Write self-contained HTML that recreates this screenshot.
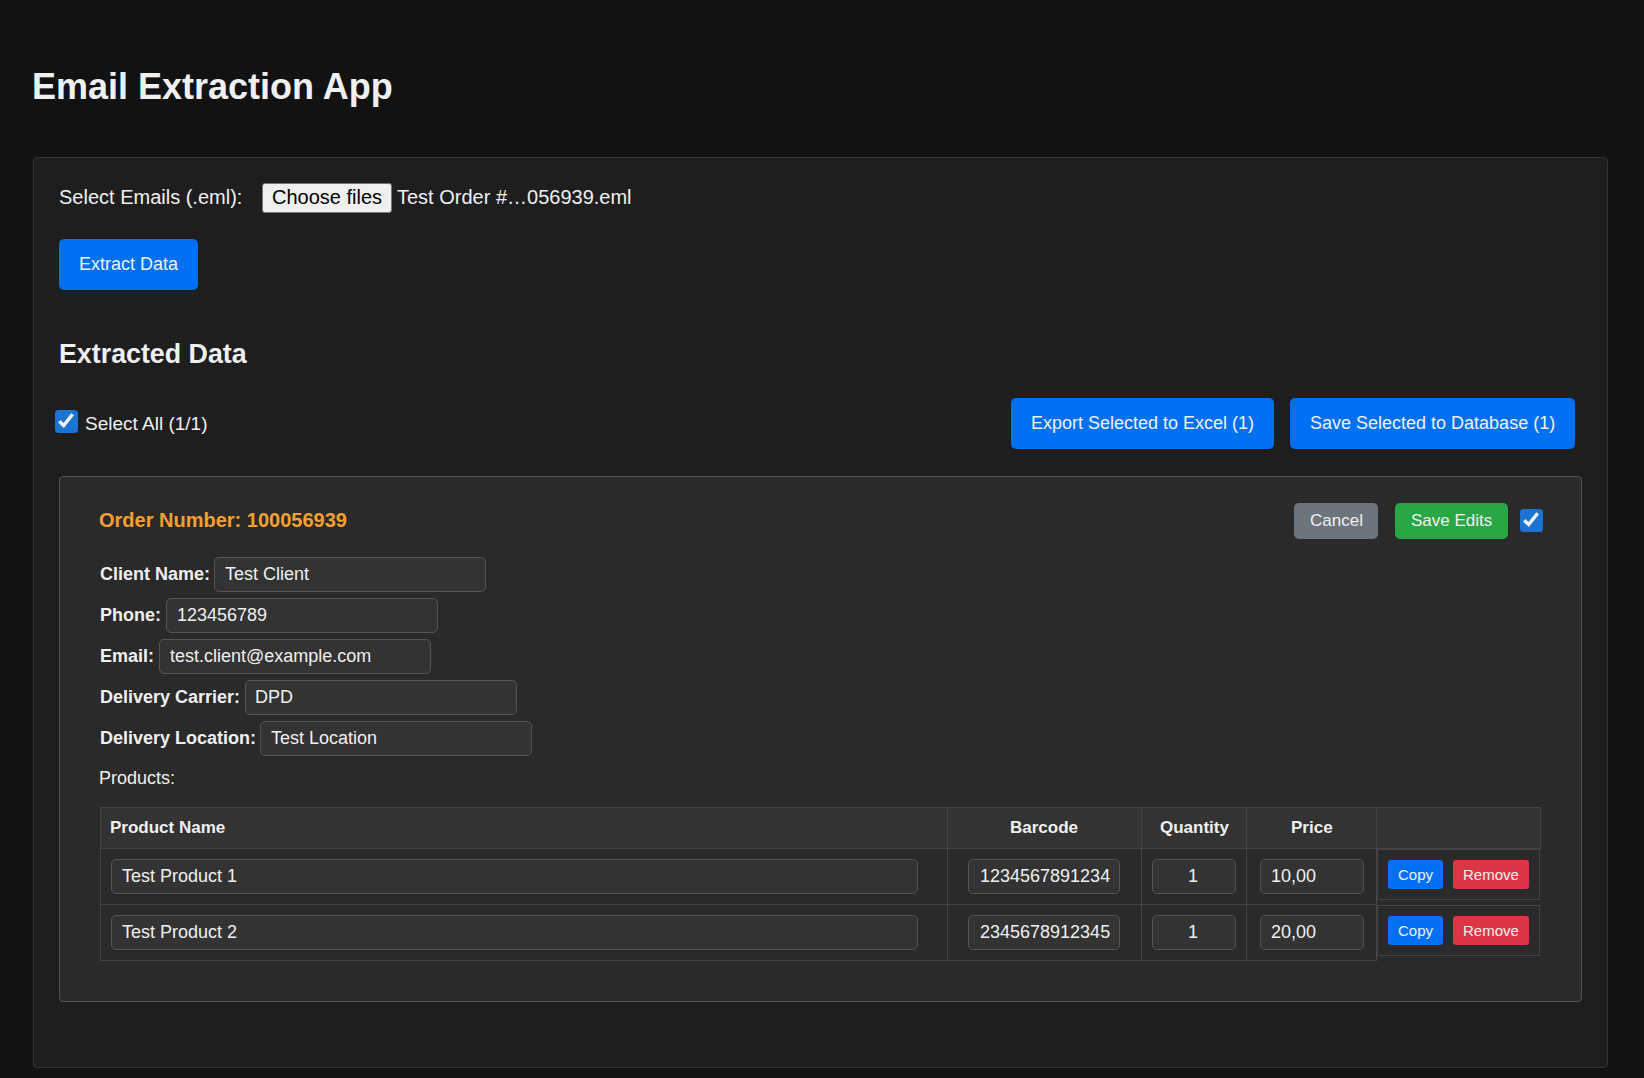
<!DOCTYPE html>
<html><head><meta charset="utf-8"><title>Email Extraction App</title>
<style>
html,body{margin:0;padding:0;background:#121212;width:1644px;height:1078px;overflow:hidden;font-family:"Liberation Sans", sans-serif;}
.r{position:absolute;box-sizing:border-box;}
.t{position:absolute;white-space:pre;font-family:"Liberation Sans", sans-serif;}
</style></head><body>

<div class="r" style="left:33px;top:157px;width:1575px;height:911px;background:#1e1e1e;border:1px solid #333333;border-radius:4px"></div>
<div class="r" style="left:262px;top:183px;width:130px;height:30px;background:#efefef;border:1px solid #767676;border-radius:3px"></div>
<div class="r" style="left:59px;top:239px;width:139px;height:51px;background:#0070f3;border-radius:5px"></div>
<div class="r" style="left:1011px;top:398px;width:263px;height:51px;background:#0070f3;border-radius:5px"></div>
<div class="r" style="left:1290px;top:398px;width:285px;height:51px;background:#0070f3;border-radius:5px"></div>
<div class="r" style="left:59px;top:476px;width:1523px;height:526px;background:#2a2a2a;border:1px solid #555555;border-radius:4px"></div>
<div class="r" style="left:1294px;top:503px;width:84px;height:36px;background:#6c757d;border-radius:5px"></div>
<div class="r" style="left:1395px;top:503px;width:113px;height:36px;background:#28a745;border-radius:5px"></div>
<div class="r" style="left:214px;top:557px;width:272px;height:35px;background:#333333;border:1px solid #555555;border-radius:5px"></div>
<div class="r" style="left:166px;top:598px;width:272px;height:35px;background:#333333;border:1px solid #555555;border-radius:5px"></div>
<div class="r" style="left:159px;top:639px;width:272px;height:35px;background:#333333;border:1px solid #555555;border-radius:5px"></div>
<div class="r" style="left:245px;top:680px;width:272px;height:35px;background:#333333;border:1px solid #555555;border-radius:5px"></div>
<div class="r" style="left:260px;top:721px;width:272px;height:35px;background:#333333;border:1px solid #555555;border-radius:5px"></div>
<div class="r" style="left:100px;top:807px;width:1277px;height:42px;background:#333333;border-radius:0px"></div>
<div class="r" style="left:1377px;top:807px;width:164px;height:42px;background:#333333;border-radius:0px"></div>
<div class="r" style="left:111px;top:859px;width:807px;height:35px;background:#333333;border:1px solid #555555;border-radius:5px"></div>
<div class="r" style="left:968px;top:859px;width:152px;height:35px;background:#333333;border:1px solid #555555;border-radius:5px"></div>
<div class="r" style="left:1152px;top:859px;width:84px;height:35px;background:#333333;border:1px solid #555555;border-radius:5px"></div>
<div class="r" style="left:1260px;top:859px;width:104px;height:35px;background:#333333;border:1px solid #555555;border-radius:5px"></div>
<div class="r" style="left:1377px;top:849px;width:163px;height:51px;background:transparent;border:1px solid #444444;border-radius:0px"></div>
<div class="r" style="left:1388px;top:860px;width:55px;height:29px;background:#0070f3;border-radius:3px"></div>
<div class="r" style="left:1453px;top:860px;width:76px;height:29px;background:#dc3545;border-radius:3px"></div>
<div class="r" style="left:111px;top:915px;width:807px;height:35px;background:#333333;border:1px solid #555555;border-radius:5px"></div>
<div class="r" style="left:968px;top:915px;width:152px;height:35px;background:#333333;border:1px solid #555555;border-radius:5px"></div>
<div class="r" style="left:1152px;top:915px;width:84px;height:35px;background:#333333;border:1px solid #555555;border-radius:5px"></div>
<div class="r" style="left:1260px;top:915px;width:104px;height:35px;background:#333333;border:1px solid #555555;border-radius:5px"></div>
<div class="r" style="left:1377px;top:905px;width:163px;height:51px;background:transparent;border:1px solid #444444;border-radius:0px"></div>
<div class="r" style="left:1388px;top:916px;width:55px;height:29px;background:#0070f3;border-radius:3px"></div>
<div class="r" style="left:1453px;top:916px;width:76px;height:29px;background:#dc3545;border-radius:3px"></div>
<div class="r" style="left:100px;top:807px;width:1441px;height:1px;background:#444444"></div>
<div class="r" style="left:100px;top:848px;width:1441px;height:1px;background:#444444"></div>
<div class="r" style="left:100px;top:904px;width:1277px;height:1px;background:#444444"></div>
<div class="r" style="left:100px;top:960px;width:1277px;height:1px;background:#444444"></div>
<div class="r" style="left:100px;top:807px;width:1px;height:154px;background:#444444"></div>
<div class="r" style="left:947px;top:807px;width:1px;height:154px;background:#444444"></div>
<div class="r" style="left:1141px;top:807px;width:1px;height:154px;background:#444444"></div>
<div class="r" style="left:1246px;top:807px;width:1px;height:154px;background:#444444"></div>
<div class="r" style="left:1376px;top:807px;width:1px;height:154px;background:#444444"></div>
<div class="r" style="left:1540px;top:807px;width:1px;height:42px;background:#444444"></div>
<svg class="r" style="left:55px;top:410px" width="23" height="23" viewBox="0 0 23 23"><rect x="0" y="0" width="23" height="23" rx="3.5" fill="#1b74d1"/><path d="M4.25 11.25 L8.7 15.5 L17.65 4.25" fill="none" stroke="#f0f0f0" stroke-width="3.5"/></svg>
<svg class="r" style="left:1520px;top:509px" width="23" height="23" viewBox="0 0 23 23"><rect x="0" y="0" width="23" height="23" rx="3.5" fill="#1b74d1"/><path d="M4.25 11.25 L8.7 15.5 L17.65 4.25" fill="none" stroke="#f0f0f0" stroke-width="3.5"/></svg>
<div class="t" style="left:32px;top:64px;font-size:36px;line-height:45px;font-weight:700;color:#f0f0f0">Email Extraction App</div>
<div class="t" style="left:59px;top:185px;font-size:20px;line-height:25px;font-weight:400;color:#f0f0f0">Select Emails (.eml):</div>
<div class="t" style="left:272px;top:185px;font-size:20px;line-height:25px;font-weight:400;color:#000000">Choose files</div>
<div class="t" style="left:397px;top:185px;font-size:20px;line-height:25px;font-weight:400;color:#f0f0f0">Test Order #…056939.eml</div>
<div class="t" style="left:79px;top:253px;font-size:18px;line-height:22px;font-weight:400;color:#f0f0f0">Extract Data</div>
<div class="t" style="left:59px;top:337px;font-size:26.8px;line-height:34px;font-weight:700;color:#f0f0f0">Extracted Data</div>
<div class="t" style="left:85px;top:412px;font-size:19px;line-height:24px;font-weight:400;color:#f0f0f0">Select All (1/1)</div>
<div class="t" style="left:1031px;top:412px;font-size:18px;line-height:22px;font-weight:400;color:#f0f0f0">Export Selected to Excel (1)</div>
<div class="t" style="left:1310px;top:412px;font-size:18px;line-height:22px;font-weight:400;color:#f0f0f0">Save Selected to Database (1)</div>
<div class="t" style="left:99px;top:508px;font-size:20px;line-height:25px;font-weight:700;color:#f5a031">Order Number: 100056939</div>
<div class="t" style="left:1310px;top:510px;font-size:17px;line-height:21px;font-weight:400;color:#f0f0f0">Cancel</div>
<div class="t" style="left:1411px;top:510px;font-size:17px;line-height:21px;font-weight:400;color:#f0f0f0">Save Edits</div>
<div class="t" style="left:100px;top:563px;font-size:18px;line-height:22px;font-weight:700;color:#f0f0f0">Client Name:</div>
<div class="t" style="left:225px;top:563px;font-size:18px;line-height:22px;font-weight:400;color:#f0f0f0">Test Client</div>
<div class="t" style="left:100px;top:604px;font-size:18px;line-height:22px;font-weight:700;color:#f0f0f0">Phone:</div>
<div class="t" style="left:177px;top:604px;font-size:18px;line-height:22px;font-weight:400;color:#f0f0f0">123456789</div>
<div class="t" style="left:100px;top:645px;font-size:18px;line-height:22px;font-weight:700;color:#f0f0f0">Email:</div>
<div class="t" style="left:170px;top:645px;font-size:18px;line-height:22px;font-weight:400;color:#f0f0f0">test.client@example.com</div>
<div class="t" style="left:100px;top:686px;font-size:18px;line-height:22px;font-weight:700;color:#f0f0f0">Delivery Carrier:</div>
<div class="t" style="left:255px;top:686px;font-size:18px;line-height:22px;font-weight:400;color:#f0f0f0">DPD</div>
<div class="t" style="left:100px;top:727px;font-size:18px;line-height:22px;font-weight:700;color:#f0f0f0">Delivery Location:</div>
<div class="t" style="left:271px;top:727px;font-size:18px;line-height:22px;font-weight:400;color:#f0f0f0">Test Location</div>
<div class="t" style="left:99px;top:767px;font-size:18px;line-height:22px;font-weight:400;color:#f0f0f0">Products:</div>
<div class="t" style="left:110px;top:817px;font-size:17px;line-height:21px;font-weight:700;color:#f0f0f0">Product Name</div>
<div class="t" style="left:1010px;top:817px;font-size:17px;line-height:21px;font-weight:700;color:#f0f0f0">Barcode</div>
<div class="t" style="left:1160px;top:817px;font-size:17px;line-height:21px;font-weight:700;color:#f0f0f0">Quantity</div>
<div class="t" style="left:1291px;top:817px;font-size:17px;line-height:21px;font-weight:700;color:#f0f0f0">Price</div>
<div class="t" style="left:122px;top:865px;font-size:18px;line-height:22px;font-weight:400;color:#f0f0f0">Test Product 1</div>
<div class="t" style="left:980px;top:865px;font-size:18px;line-height:22px;font-weight:400;color:#f0f0f0">1234567891234</div>
<div class="t" style="left:1188px;top:865px;font-size:18px;line-height:22px;font-weight:400;color:#f0f0f0">1</div>
<div class="t" style="left:1271px;top:865px;font-size:18px;line-height:22px;font-weight:400;color:#f0f0f0">10,00</div>
<div class="t" style="left:1398px;top:865px;font-size:15px;line-height:19px;font-weight:400;color:#f0f0f0">Copy</div>
<div class="t" style="left:1463px;top:865px;font-size:15px;line-height:19px;font-weight:400;color:#f0f0f0">Remove</div>
<div class="t" style="left:122px;top:921px;font-size:18px;line-height:22px;font-weight:400;color:#f0f0f0">Test Product 2</div>
<div class="t" style="left:980px;top:921px;font-size:18px;line-height:22px;font-weight:400;color:#f0f0f0">2345678912345</div>
<div class="t" style="left:1188px;top:921px;font-size:18px;line-height:22px;font-weight:400;color:#f0f0f0">1</div>
<div class="t" style="left:1271px;top:921px;font-size:18px;line-height:22px;font-weight:400;color:#f0f0f0">20,00</div>
<div class="t" style="left:1398px;top:921px;font-size:15px;line-height:19px;font-weight:400;color:#f0f0f0">Copy</div>
<div class="t" style="left:1463px;top:921px;font-size:15px;line-height:19px;font-weight:400;color:#f0f0f0">Remove</div>
</body></html>
